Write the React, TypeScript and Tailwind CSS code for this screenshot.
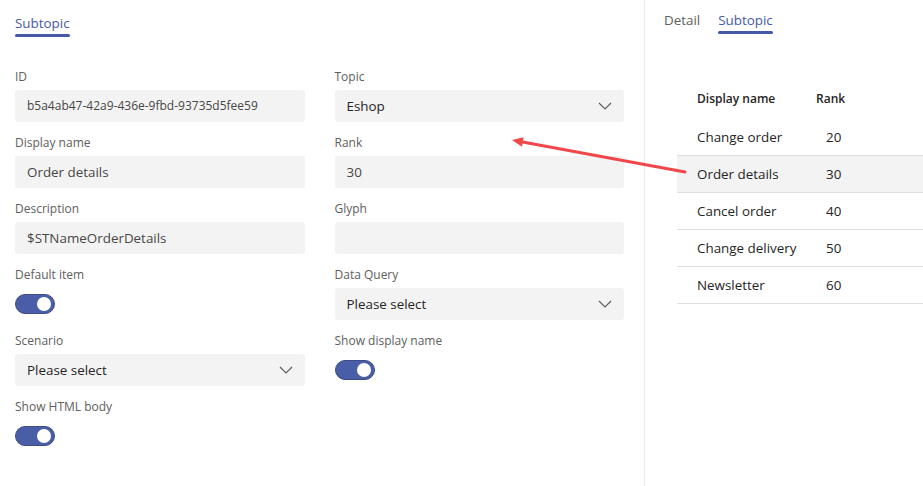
import React from "react";

const font = { fontFamily: '"Open Sans", "Liberation Sans", sans-serif' };

function Label({ children }: { children: React.ReactNode }) {
  return <div className="h-4 text-[12px] leading-4 text-[#605e5c] mb-[5px]">{children}</div>;
}

function Chevron() {
  return (
    <svg width="14" height="8" viewBox="0 0 14 8" className="text-[#605e5c]">
      <polyline points="1,1 7,7 13,1" fill="none" stroke="currentColor" strokeWidth="1.2" />
    </svg>
  );
}

function Field({ label, value, small, select }: { label: string; value?: string; small?: boolean; select?: boolean }) {
  return (
    <div className="mb-[13px]">
      <Label>{label}</Label>
      <div className="h-8 rounded-[3px] bg-[#f3f3f3] flex items-center justify-between pl-3 pr-[12px]">
        <span
          className={
            small
              ? "text-[12px] text-[#484644]"
              : select
              ? "text-[13.4px] text-[#252423]"
              : "text-[13.4px] text-[#484644]"
          }
        >
          {value}
        </span>
        {select && <Chevron />}
      </div>
    </div>
  );
}

function Toggle({ label }: { label: string }) {
  return (
    <div className="mb-[13px]">
      <Label>{label}</Label>
      <div className="h-8 flex items-center">
        <div className="w-10 h-5 rounded-full bg-[#4a5ea8] border border-[#3e4c86] flex items-center justify-end pr-[3px]">
          <div className="w-[14px] h-[14px] rounded-full bg-white" />
        </div>
      </div>
    </div>
  );
}

const rows = [
  { name: "Change order", rank: 20 },
  { name: "Order details", rank: 30, active: true },
  { name: "Cancel order", rank: 40 },
  { name: "Change delivery", rank: 50 },
  { name: "Newsletter", rank: 60 },
];

export default function App() {
  return (
    <div className="relative w-[923px] h-[486px] bg-white flex overflow-hidden" style={font}>
      {/* Left: form */}
      <div className="w-[645px] h-full border-r border-[#e8e8e8] pl-[15px] pr-5">
        <div className="pt-[10px]">
          <div className="inline-block">
            <div className="text-[13.4px] leading-5 text-[#4659a6]">Subtopic</div>
            <div className="mt-[1px] h-[3px] rounded-full bg-[#4659a6]" />
          </div>
        </div>

        <div className="mt-[32px] grid grid-cols-2 gap-x-[30px]">
          <div>
            <Field label="ID" value="b5a4ab47-42a9-436e-9fbd-93735d5fee59" small />
            <Field label="Display name" value="Order details" />
            <Field label="Description" value="$STNameOrderDetails" />
            <Toggle label="Default item" />
            <Field label="Scenario" value="Please select" select />
            <Toggle label="Show HTML body" />
          </div>
          <div>
            <Field label="Topic" value="Eshop" select />
            <Field label="Rank" value="30" />
            <Field label="Glyph" value="" />
            <Field label="Data Query" value="Please select" select />
            <Toggle label="Show display name" />
          </div>
        </div>
      </div>

      {/* Right: list */}
      <div className="flex-1 h-full">
        <div className="pt-[10px] pl-[19px] flex gap-[18px]">
          <div className="text-[13.4px] leading-5 text-[#605e5c]">Detail</div>
          <div>
            <div className="text-[13.4px] leading-5 text-[#4659a6]">Subtopic</div>
            <div className="mt-[1px] h-[3px] rounded-full bg-[#4659a6]" />
          </div>
        </div>

        <div className="ml-[32px] mt-[44px]">
          <div className="h-[41px] flex items-center pl-5 text-[12px] font-semibold text-[#252423]">
            <div className="w-[119px]">Display name</div>
            <div>Rank</div>
          </div>
          {rows.map((r) => (
            <div
              key={r.name}
              className={`h-[37px] flex items-center pl-5 text-[13.4px] text-[#252423] border-b border-[#e1dfdd] ${
                r.active ? "bg-[#f3f3f3]" : ""
              }`}
            >
              <div className="w-[129px]">{r.name}</div>
              <div>{r.rank}</div>
            </div>
          ))}
        </div>
      </div>

      {/* Annotation arrow */}
      <svg className="absolute inset-0 pointer-events-none" width="923" height="486">
        <line x1="685" y1="172" x2="520" y2="141.6" stroke="#f0474a" strokeWidth="3" strokeLinecap="round" />
        <polygon points="512,140 523.6,137.2 522,146.8" fill="#f0474a" />
      </svg>
    </div>
  );
}
